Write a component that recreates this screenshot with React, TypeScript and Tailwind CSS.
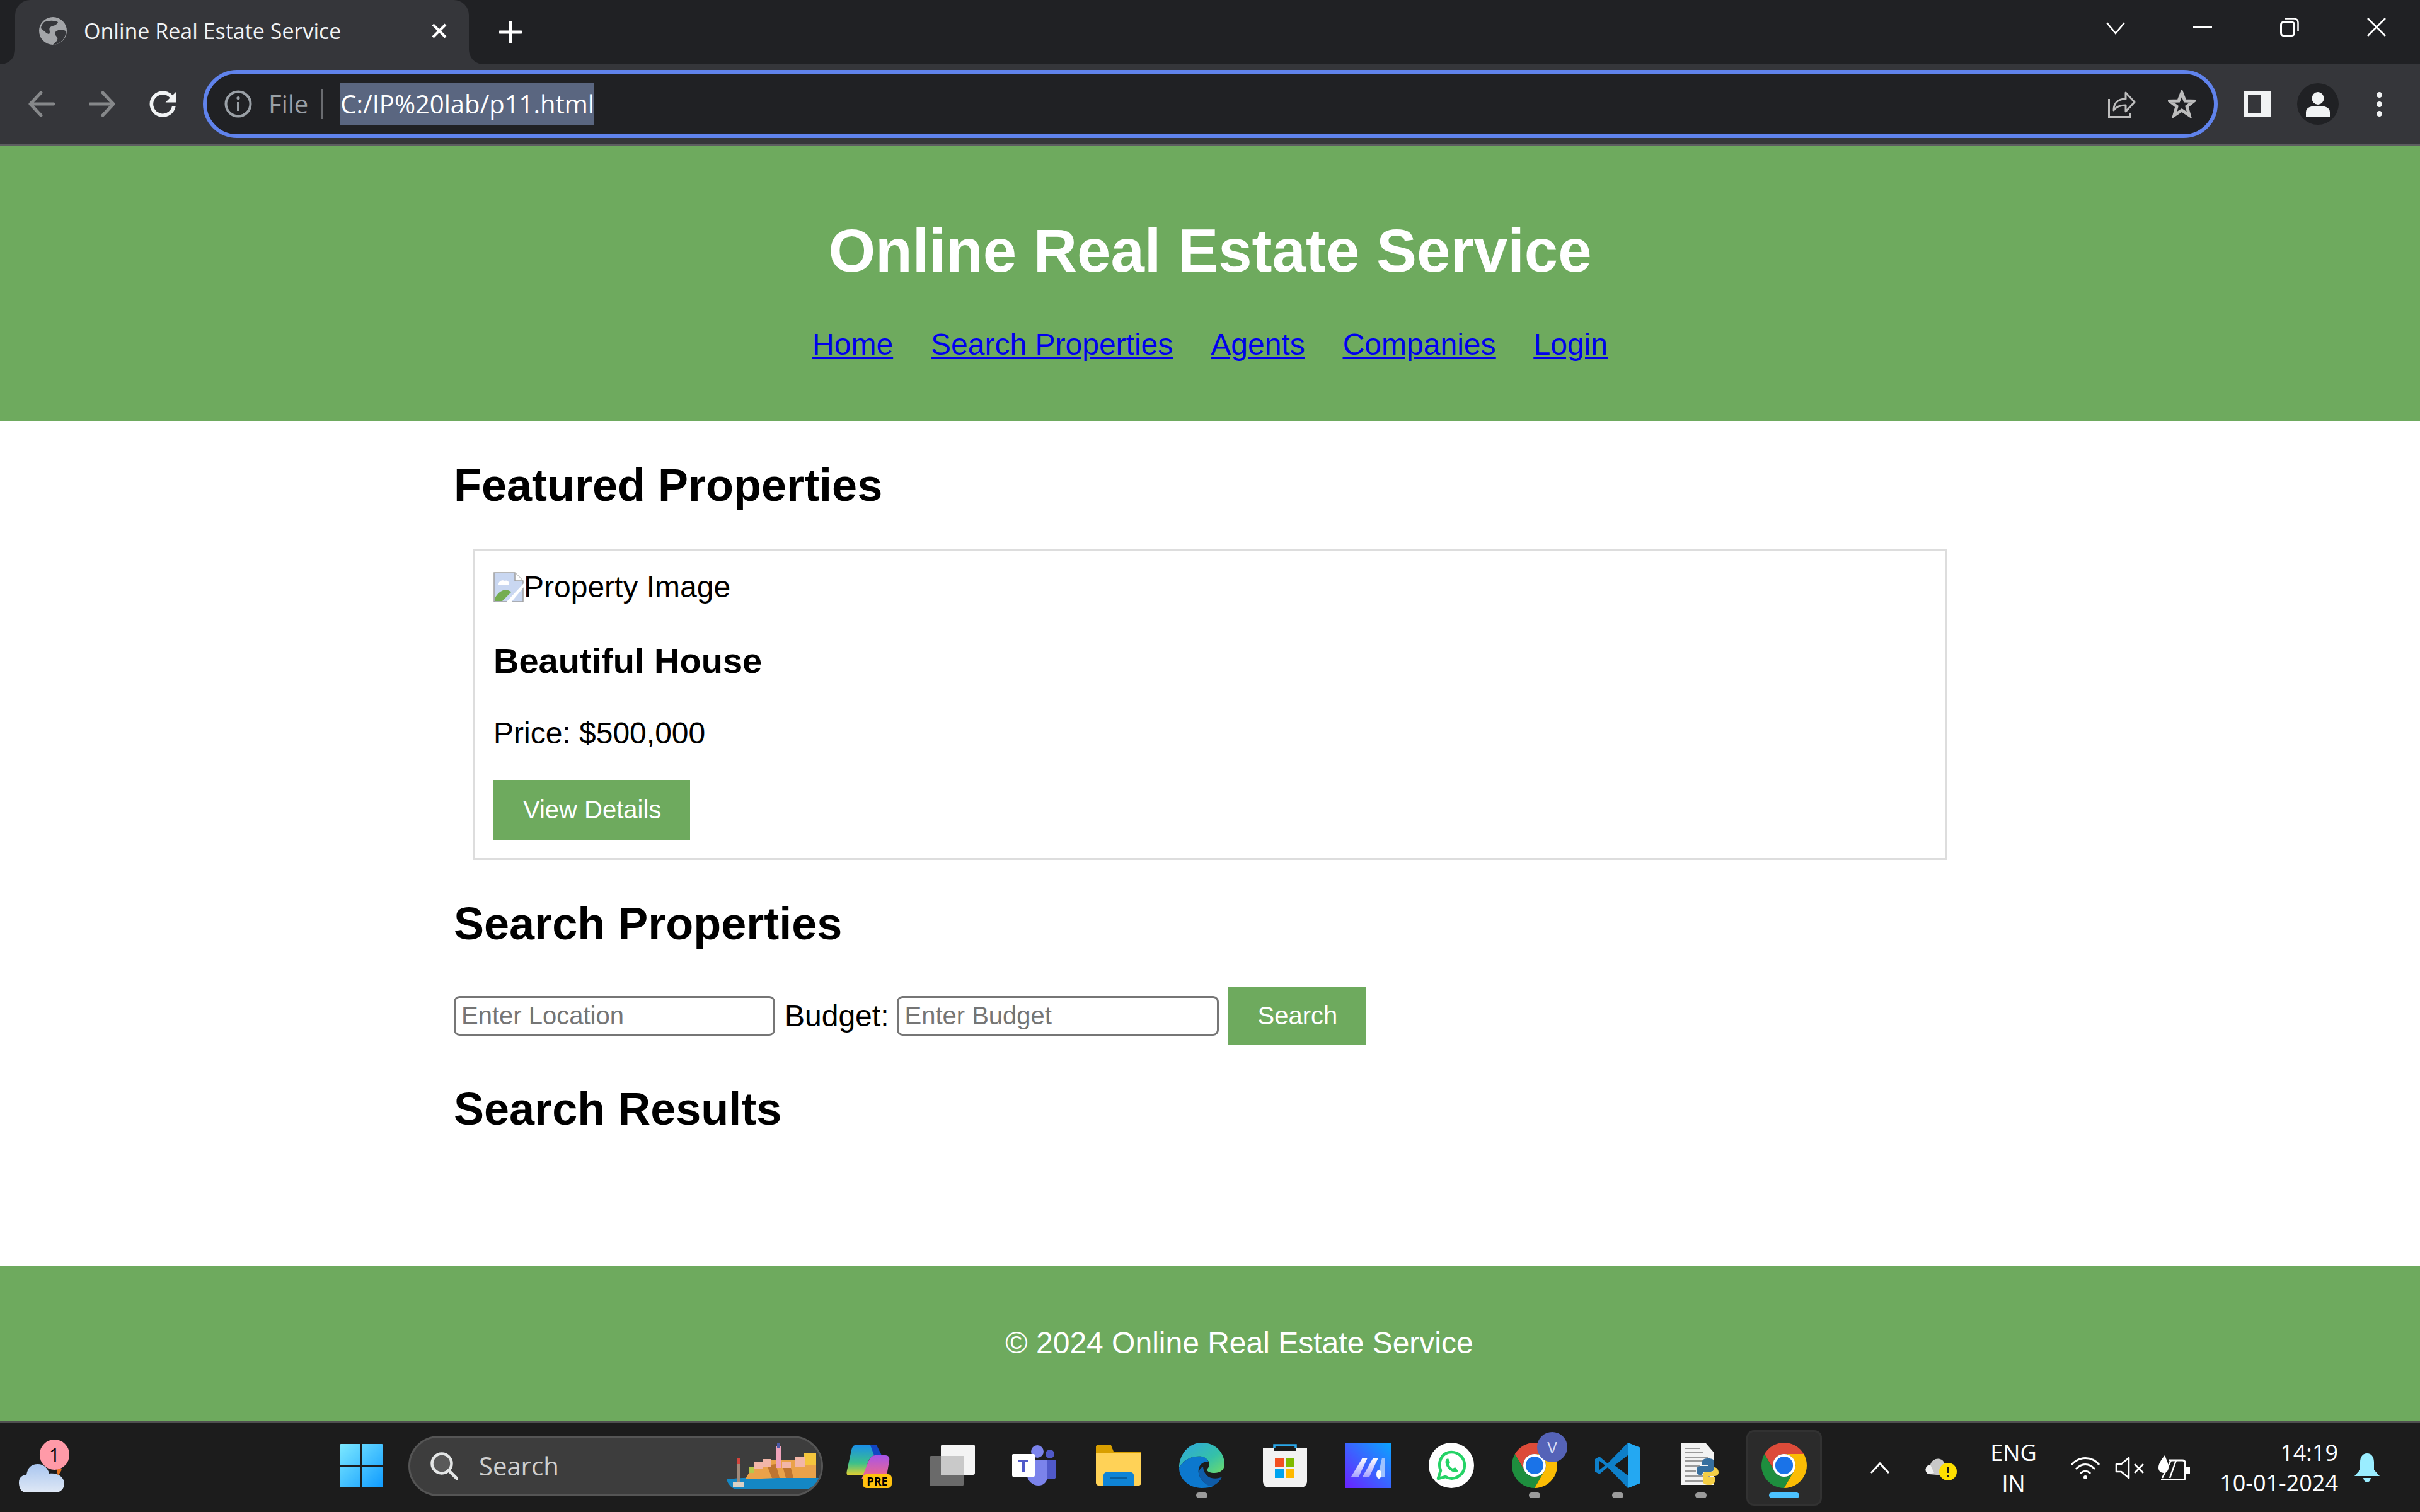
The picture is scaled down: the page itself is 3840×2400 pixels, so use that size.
import React from 'react';

const uiFont = "font-['Open_Sans','Noto_Sans',sans-serif]";

function ChromeLogo({ className }: { className: string }) {
    return (
        <svg viewBox="2 2 44 44" className={className}>
            <path d="M4.95 13A22 22 0 0 1 43.05 13H24A11 11 0 0 0 14.47 29.5Z" fill="#dd4b39" />
            <path d="M4.95 13A22 22 0 0 0 24 46L33.53 29.5A11 11 0 0 1 14.47 29.5Z" fill="#1e8e3e" />
            <path d="M24 46A22 22 0 0 0 43.05 13H24A11 11 0 0 1 33.53 29.5Z" fill="#fbbc04" />
            <circle cx="24" cy="24" r="11" fill="#fff" />
            <circle cx="24" cy="24" r="8.6" fill="#1a73e8" />
        </svg>
    );
}

function TabStrip() {
    return (
        <div className="flex h-[102px] shrink-0 items-start bg-[#202124]">
            <div className="relative ml-[24px] flex h-[102px] w-[720px] items-center rounded-t-[24px] bg-[#35363a] pb-[4px] pl-[38px]">
                <svg viewBox="0 0 24 24" className="absolute bottom-0 left-[-24px] h-[24px] w-[24px]">
                    <path d="M24 0V24H0C14 24 24 14 24 0Z" fill="#35363a" />
                </svg>
                <svg viewBox="0 0 24 24" className="absolute bottom-0 right-[-24px] h-[24px] w-[24px]">
                    <path d="M0 0V24H24C10 24 0 14 0 0Z" fill="#35363a" />
                </svg>
                <svg viewBox="0 0 44 44" className="h-[44px] w-[44px] shrink-0">
                    <circle cx="22" cy="22" r="22" fill="#a3a5a8" />
                    <path d="M8 8C16 5 24 5 30 8C28 14 22 13 18 16C14 19 19 23 16 27C12 27 6 20 3 18C3 14 5 11 8 8ZM42 22C36 19 28 20 25 25C24 30 31 31 29 36C27 40 24 42 22 44C32 44 44 34 42 22Z" fill="#35363a" />
                </svg>
                <span className={`ml-[27px] w-[405px] whitespace-nowrap text-[34px] leading-[48px] text-[#f1f3f4] ${uiFont}`}>Online Real Estate Service</span>
                <svg viewBox="0 0 24 24" className="ml-[147px] h-[24px] w-[24px]">
                    <path d="M2 2L22 22M22 2L2 22" stroke="#fff" strokeWidth="4" />
                </svg>
            </div>
            <svg viewBox="0 0 36 36" className="ml-[48px] mt-[33px] h-[36px] w-[36px]">
                <path d="M18 1V35M1 18H35" stroke="#fff" strokeWidth="5" strokeLinecap="round" />
            </svg>
            <div className="ml-auto mr-[54px] mt-[28px] flex items-start gap-[108px]">
                <svg viewBox="0 0 30 30" className="h-[30px] w-[30px]">
                    <path d="M1 8L15 25L29 8" stroke="#fff" strokeWidth="2.6" fill="none" />
                </svg>
                <svg viewBox="0 0 30 30" className="h-[30px] w-[30px]">
                    <path d="M0 15H30" stroke="#fff" strokeWidth="3" />
                </svg>
                <svg viewBox="0 0 30 30" className="h-[30px] w-[30px]">
                    <rect x="1.5" y="7" width="21" height="21.5" rx="4" stroke="#fff" strokeWidth="3" fill="none" />
                    <path d="M8 1.5H22C26 1.5 28.5 4 28.5 8V22" stroke="#fff" strokeWidth="2.5" fill="none" />
                </svg>
                <svg viewBox="0 0 30 30" className="h-[30px] w-[30px]">
                    <path d="M1 1L29 29M29 1L1 29" stroke="#fff" strokeWidth="2.6" />
                </svg>
            </div>
        </div>
    );
}

function Toolbar() {
    return (
        <div className="flex h-[129px] shrink-0 items-center border-b-[3px] border-[#5c5d60] bg-[#35363a]">
            <svg viewBox="0 0 42 42" className="ml-[45px] h-[42px] w-[42px]">
                <path d="M20 3L3 21L20 39M4 21H40" stroke="#86888a" strokeWidth="5" strokeLinecap="round" strokeLinejoin="round" fill="none" />
            </svg>
            <svg viewBox="0 0 42 42" className="ml-[54px] h-[42px] w-[42px]">
                <path d="M22 3L39 21L22 39M38 21H2" stroke="#86888a" strokeWidth="5" strokeLinecap="round" strokeLinejoin="round" fill="none" />
            </svg>
            <svg viewBox="0 0 42 42" className="ml-[54px] h-[43px] w-[43px]">
                <path d="M36 12A17.5 17.5 0 1 0 38 24" stroke="#f1f3f4" strokeWidth="5.5" fill="none" />
                <path d="M41 2V18H25Z" fill="#f1f3f4" />
            </svg>
            <div className="ml-[42px] flex h-[108px] w-[3197px] items-center rounded-full border-[6px] border-[#6083ec] bg-[#202124]">
                <svg viewBox="0 0 44 44" className="ml-[28px] h-[44px] w-[44px]">
                    <circle cx="22" cy="22" r="19.5" stroke="#9aa0a6" strokeWidth="4" fill="none" />
                    <path d="M22 19V33" stroke="#9aa0a6" strokeWidth="4" />
                    <circle cx="22" cy="12.5" r="2.6" fill="#9aa0a6" />
                </svg>
                <span className={`ml-[26px] text-[40px] leading-[48px] text-[#9aa0a6] ${uiFont}`}>File</span>
                <div className="ml-[21px] h-[47px] w-[2px] bg-[#6a6c70]" />
                <span className={`ml-[28px] flex h-[66px] w-[402px] items-center whitespace-nowrap bg-[#5a6680] text-[40px] text-white ${uiFont}`}>C:/IP%20lab/p11.html</span>
                <svg viewBox="0 0 44 44" className="ml-auto h-[44px] w-[44px]">
                    <path d="M1.5 14V42.5H35V36" stroke="#bdbdbd" strokeWidth="3" fill="none" />
                    <path d="M9 32C9 20 16 14 28 14V4L42 19L28 34V24C20 24 13 26 9 32Z" stroke="#bdbdbd" strokeWidth="3" strokeLinejoin="round" fill="none" />
                </svg>
                <svg viewBox="0 0 44 44" className="ml-[51px] mr-[29px] h-[44px] w-[44px]">
                    <path d="M22 4L27 17L41 17.5L30 26L34 40L22 32L10 40L14 26L3 17.5L17 17Z" stroke="#bdbdbd" strokeWidth="5" strokeLinejoin="miter" fill="none" />
                </svg>
            </div>
            <div className="ml-[42px] flex h-[42px] w-[42px] justify-start bg-[#f1f3f4] py-[6px] pl-[6px]">
                <div className="h-[30px] w-[21px] bg-[#35363a]" />
            </div>
            <div className="ml-[42px] flex h-[66px] w-[66px] items-center justify-center rounded-full bg-[#202124]">
                <svg viewBox="0 0 40 40" className="h-[40px] w-[40px]">
                    <ellipse cx="20" cy="11" rx="9.5" ry="10" fill="#f1f3f4" />
                    <path d="M1 40V33C1 25 10 23 20 23C30 23 39 25 39 33V40Z" fill="#f1f3f4" />
                </svg>
            </div>
            <div className="ml-[60px] flex flex-col gap-[6px]">
                <div className="h-[9px] w-[9px] rounded-full bg-[#f1f3f4]" />
                <div className="h-[9px] w-[9px] rounded-full bg-[#f1f3f4]" />
                <div className="h-[9px] w-[9px] rounded-full bg-[#f1f3f4]" />
            </div>
        </div>
    );
}

function BrokenImage() {
    return (
        <svg viewBox="0 0 48 48" className="h-[48px] w-[48px] shrink-0">
            <path d="M1 1H34L47 14V47H1Z" fill="#c9d7f1" stroke="#a0a0a0" strokeWidth="1.5" />
            <path d="M34 1V14H47" fill="#fff" stroke="#a0a0a0" strokeWidth="1.5" />
            <path d="M8 20C8 14 14 12 18 14C22 12 26 16 24 20Z" fill="#fff" />
            <path d="M2 46V42C8 30 20 24 28 32L14 46Z" fill="#74ad50" />
            <path d="M20 48L48 18V24L28 48Z" fill="#fff" />
        </svg>
    );
}

function Page() {
    return (
        <div className="flex min-h-0 flex-1 flex-col bg-white font-['Liberation_Sans',Arial,sans-serif] text-black">
            <header className="flex h-[438px] shrink-0 flex-col items-center bg-[#6eaa5e]">
                <h1 className="mt-[112px] text-[96px] font-bold leading-[110px] text-white">Online Real Estate Service</h1>
                <nav className="mt-[66px] flex gap-[60px] text-[48px] leading-[55px] text-[#0000ee] underline">
                    <a href="#">Home</a>
                    <a href="#">Search Properties</a>
                    <a href="#">Agents</a>
                    <a href="#">Companies</a>
                    <a href="#">Login</a>
                </nav>
            </header>
            <main className="mx-auto w-[2400px] flex-1">
                <h2 className="mt-[60px] text-[72px] font-bold leading-[83px]">Featured Properties</h2>
                <div className="mx-[30px] mt-[59px] h-[494px] border-[3px] border-[#dddddd] px-[30px] pt-[30px]">
                    <div className="flex h-[55px] items-center text-[48px] leading-[55px]">
                        <BrokenImage />
                        <span>Property Image</span>
                    </div>
                    <h3 className="mt-[58px] text-[56px] font-bold leading-[64px]">Beautiful House</h3>
                    <p className="mt-[55px] text-[48px] leading-[55px]">Price: $500,000</p>
                    <button className="mt-[47px] block bg-[#6eaa5e] py-[24px] pl-[47px] pr-[46px] text-[40px] leading-[47px] text-white">View Details</button>
                </div>
                <h2 className="mt-[60px] text-[72px] font-bold leading-[83px]">Search Properties</h2>
                <div className="mt-[58px] flex items-center text-[48px]">
                    <input placeholder="Enter Location" className="h-[63px] w-[510px] rounded-[9px] border-[3px] border-[#767676] px-[9px] text-[40px] placeholder:text-[#757575]" />
                    <span className="ml-[15px] leading-[55px]">Budget:</span>
                    <input placeholder="Enter Budget" className="ml-[13px] h-[63px] w-[511px] rounded-[9px] border-[3px] border-[#767676] px-[9px] text-[40px] placeholder:text-[#757575]" />
                    <button className="ml-[14px] bg-[#6eaa5e] py-[23px] pl-[47px] pr-[46px] text-[40px] leading-[47px] text-white">Search</button>
                </div>
                <h2 className="mt-[60px] text-[72px] font-bold leading-[83px]">Search Results</h2>
            </main>
            <footer className="flex h-[246px] shrink-0 items-center justify-center bg-[#6eaa5e] pb-[4px] pl-[93px] text-[48px] leading-[55px] text-white">
                © 2024 Online Real Estate Service
            </footer>
        </div>
    );
}

function WeatherIcon() {
    return (
        <div className="relative ml-[30px] h-[84px] w-[80px]">
            <svg viewBox="0 0 72 60" className="absolute bottom-[0px] left-0 h-[60px] w-[72px]">
                <defs>
                    <linearGradient id="cloud" x1="0" y1="0" x2="0" y2="1">
                        <stop offset="0" stopColor="#a9c6f0" />
                        <stop offset="1" stopColor="#dfe8f5" />
                    </linearGradient>
                </defs>
                <path d="M58 12L68 24L62 34Z" fill="#e5711c" />
                <path d="M12 60C2 60 0 50 0 44C0 36 6 32 12 32C14 20 20 15 30 15C40 15 46 22 48 30C62 28 72 36 72 46C72 54 66 60 58 60Z" fill="url(#cloud)" />
            </svg>
            <div className="absolute left-[33px] top-0 flex h-[48px] w-[47px] items-center justify-center rounded-full bg-[#ff9aa8] font-['Open_Sans',sans-serif] text-[30px] leading-none text-black">1</div>
        </div>
    );
}

function SearchBox() {
    return (
        <div className={`ml-[40px] flex h-[96px] w-[658px] items-center rounded-full border-[3px] border-[#555555] bg-[#3d3d3d] pl-[32px] ${uiFont}`}>
            <svg viewBox="0 0 44 44" className="h-[44px] w-[44px] shrink-0">
                <circle cx="18" cy="18" r="15.5" stroke="#e4e6e6" strokeWidth="4.5" fill="#5a5a5a" />
                <path d="M29 29L42 42" stroke="#e4e6e6" strokeWidth="5" strokeLinecap="round" />
            </svg>
            <span className="ml-[33px] text-[40px] leading-[48px] text-[#cfcfcf]">Search</span>
            <svg viewBox="0 0 146 74" className="ml-[266px] h-[74px] w-[146px] shrink-0">
                <path d="M0 58C30 54 110 54 146 56C142 66 134 74 124 74H18C8 74 2 66 0 58Z" fill="#1487c4" />
                <path d="M30 58C36 44 44 38 52 34L62 28H120L142 34V56H80Z" fill="#eaa24a" />
                <path d="M64 36L72 56H84L78 34ZM88 34L94 56H106L100 32Z" fill="#bf7530" />
                <rect x="78" y="6" width="8" height="34" fill="#f0a3bb" />
                <rect x="80" y="0" width="4" height="8" fill="#4b5aa8" />
                <path d="M122 16H142V36H122Z" fill="#f5c53d" />
                <path d="M108 22H124V38H108ZM88 30H102V40H88ZM44 30H58V42H44ZM58 26H70V38H58Z" fill="#f2b6a8" />
                <path d="M36 38H44V48H36Z" fill="#b7c84a" />
                <rect x="16" y="28" width="6" height="36" fill="#a08a7a" />
                <rect x="16" y="24" width="6" height="10" fill="#d4443c" />
                <path d="M10 62H28V70H10Z" fill="#d9d2c6" />
            </svg>
        </div>
    );
}

function CopilotIcon() {
    return (
        <div className="relative h-[68px] w-[72px]">
            <svg viewBox="0 0 72 68" className="h-[68px] w-[72px]">
                <defs>
                    <linearGradient id="cop1" x1="0" y1="0" x2="0" y2="1">
                        <stop offset="0" stopColor="#1a8fe8" />
                        <stop offset=".6" stopColor="#3cc08a" />
                        <stop offset="1" stopColor="#e8d02c" />
                    </linearGradient>
                    <linearGradient id="cop2" x1="0" y1="0" x2="0" y2="1">
                        <stop offset="0" stopColor="#a855e8" />
                        <stop offset="1" stopColor="#f76a80" />
                    </linearGradient>
                </defs>
                <path d="M14 2H46L50 16C42 18 36 22 34 30L28 50H4C0 50 0 46 1 42L8 10C9 5 11 2 14 2Z" fill="url(#cop1)" />
                <path d="M38 2H48L56 18H44Z" fill="#1247c4" />
                <path d="M46 18H62C67 18 69 22 68 27L64 50C63 54 60 56 56 56H24L34 30C36 24 40 18 46 18Z" fill="url(#cop2)" />
            </svg>
            <div className="absolute bottom-[-2px] right-0 flex h-[22px] w-[46px] items-center justify-center rounded-[6px] bg-[#ffc20e] font-['Open_Sans',sans-serif] text-[18px] font-bold leading-none text-black">PRE</div>
        </div>
    );
}

function TaskViewIcon() {
    return (
        <svg viewBox="0 0 72 66" className="h-[66px] w-[72px]">
            <rect x="0" y="18" width="54" height="48" rx="3" fill="#6a6a6a" />
            <rect x="18" y="0" width="54" height="48" rx="3" fill="#f4f4f4" />
            <rect x="18" y="18" width="36" height="30" fill="#c9c9c9" />
        </svg>
    );
}

function TeamsIcon() {
    return (
        <svg viewBox="0 0 74 64" className="h-[64px] w-[74px]">
            <circle cx="40" cy="10" r="10" fill="#7b83eb" />
            <circle cx="60" cy="14" r="7" fill="#5059c9" />
            <path d="M50 24H70V48C70 54 66 54 62 54H50Z" fill="#5059c9" />
            <path d="M24 24H56V50C56 58 50 64 42 64C32 64 24 56 24 48Z" fill="#7b83eb" />
            <rect x="0" y="14" width="36" height="36" rx="2" fill="#fff" />
            <path d="M10 23H26V27H20V42H16V27H10Z" fill="#5059c9" />
        </svg>
    );
}

function FolderIcon() {
    return (
        <svg viewBox="0 0 72 64" className="h-[64px] w-[72px]">
            <path d="M0 2C0 1 1 0 2 0H24L28 10H72V20H0Z" fill="#d99f00" />
            <path d="M0 12H72V60C72 62 70 64 68 64H4C2 64 0 62 0 60Z" fill="#ffd257" />
            <path d="M12 60V48C12 45 14 43 17 43H55C58 43 60 45 60 48V64H12Z" fill="#0f84d6" />
            <rect x="22" y="50" width="28" height="3" fill="#0a5f9e" />
        </svg>
    );
}

function EdgeIcon() {
    return (
        <svg viewBox="0 0 72 72" className="h-[72px] w-[72px]">
            <defs>
                <linearGradient id="edge1" x1="0" y1="0" x2="1" y2="1">
                    <stop offset="0" stopColor="#2ea6e0" />
                    <stop offset=".6" stopColor="#35c1a8" />
                    <stop offset="1" stopColor="#6fdc6a" />
                </linearGradient>
            </defs>
            <path d="M36 0C58 0 72 16 72 34C72 44 64 48 56 48C50 48 44 46 44 42C50 38 50 26 36 22C20 20 6 28 0 40C0 18 16 0 36 0Z" fill="url(#edge1)" />
            <path d="M0 40C6 28 20 20 36 22C44 24 46 28 46 30C34 30 28 40 32 52C36 62 46 70 56 68C50 71 42 72 36 72C16 72 0 58 0 40Z" fill="#0c78ce" />
            <path d="M32 52C36 62 46 70 52 69C60 66 66 60 68 54C62 58 50 58 44 52C40 48 38 42 38 38C33 40 30 46 32 52Z" fill="#0f5ca8" />
        </svg>
    );
}

function StoreIcon() {
    return (
        <svg viewBox="0 0 70 70" className="h-[70px] w-[70px]">
            <path d="M18 14V3H52V14" stroke="#2aa8ea" strokeWidth="3.5" fill="none" />
            <path d="M0 8H70V60C70 66 66 70 60 70H10C4 70 0 66 0 60Z" fill="#f2f2f2" />
            <rect x="18" y="8" width="34" height="4" fill="#1a1a1a" />
            <rect x="19" y="24" width="14" height="14" fill="#f25022" />
            <rect x="36" y="24" width="14" height="14" fill="#7fba00" />
            <rect x="19" y="41" width="14" height="14" fill="#00a4ef" />
            <rect x="36" y="41" width="14" height="14" fill="#ffb900" />
        </svg>
    );
}

function LetterTileIcon() {
    return (
        <svg viewBox="0 0 72 72" className="h-[72px] w-[72px]">
            <defs>
                <linearGradient id="tile" x1="1" y1="0" x2="0" y2="1">
                    <stop offset="0" stopColor="#0aa5ff" />
                    <stop offset="1" stopColor="#6a22ff" />
                </linearGradient>
                <linearGradient id="tileBar" x1="0" y1="0" x2="0" y2="1">
                    <stop offset="0" stopColor="#ffffff" />
                    <stop offset="1" stopColor="#a9a4ff" />
                </linearGradient>
            </defs>
            <rect width="72" height="72" fill="url(#tile)" />
            <path d="M27 24H35L21 54H9ZM44 24H52L38 54H27Z" fill="url(#tileBar)" />
            <path d="M58 24H62V54H52V50Z" fill="#9ec2ff" />
            <ellipse cx="53" cy="50" rx="4" ry="7" fill="#fff" />
        </svg>
    );
}

function WhatsappIcon() {
    return (
        <svg viewBox="0 0 72 72" className="h-[72px] w-[72px]">
            <circle cx="36" cy="36" r="36" fill="#fff" />
            <path d="M15 57L19 44C14 32 20 15 36 15C48 15 57 24 57 36C57 52 39 62 27 54Z" fill="none" stroke="#25d366" strokeWidth="4.5" strokeLinejoin="round" />
            <path d="M28 26C25 30 27 37 32 42C37 47 43 48 47 45L42 39L38 41C35 39 33 37 32 34L34 31L31 25Z" fill="#25d366" />
        </svg>
    );
}

function VsCodeIcon() {
    return (
        <svg viewBox="0 0 72 72" className="h-[72px] w-[72px]">
            <path d="M52 0L20 33L7 22L0 26V46L7 50L20 39L52 72L72 64V8Z" fill="#0e7fc9" />
            <path d="M52 0L72 8V64L52 72Z" fill="#24a8f2" />
            <path d="M7 29L16 36L7 43Z M52 20V52L31 36Z" fill="#1a1a1a" />
        </svg>
    );
}

function PythonFileIcon() {
    return (
        <svg viewBox="0 0 68 70" className="ml-[4px] h-[70px] w-[68px]">
            <path d="M1 0H40L52 14V66H1Z" fill="#f3f3f3" />
            <path d="M6 8H30M6 14H36M6 22H44M6 28H40M6 36H30M6 44H24M6 52H46M6 60H40" stroke="#9a9a9a" strokeWidth="2" />
            <path d="M34 30C34 25 38 24 44 24C50 24 53 26 53 30V40C53 44 50 45 46 45H40C36 45 34 48 34 50H30C26 50 25 46 25 42C25 38 28 36 32 36H44V34H34Z" fill="#366f9f" />
            <path d="M53 38C57 38 60 42 60 46C60 50 57 52 53 52H44V54H54V60C54 64 50 66 45 66C39 66 35 64 35 60V50C35 47 38 45 42 45H48C52 45 53 42 53 38Z" fill="#f5cf46" />
        </svg>
    );
}

function TaskButton({ children, dot, active }: { children: React.ReactNode; dot?: boolean; active?: boolean }) {
    return (
        <div className={`relative flex h-[120px] w-[120px] shrink-0 items-center justify-center rounded-[12px] pb-[8px] ${active ? 'border-[3px] border-[#323232] bg-[#2b2b2b]' : ''}`}>
            {children}
            {dot && <div className="absolute bottom-[12px] h-[9px] w-[18px] rounded-full bg-[#9b9b9b]" />}
            {active && <div className="absolute bottom-[9px] h-[9px] w-[48px] rounded-full bg-[#4cc2ff]" />}
        </div>
    );
}

function Taskbar() {
    return (
        <div className={`flex h-[144px] shrink-0 items-center border-t-[3px] border-[#4f4f4f] bg-[#1c1c1c] text-white ${uiFont}`}>
            <div className="mb-[6px] flex items-center">
                <WeatherIcon />
                <svg viewBox="0 0 69 69" className="ml-[429px] h-[69px] w-[69px]">
                    <defs>
                        <linearGradient id="win" x1="0" y1="0" x2="1" y2="1">
                            <stop offset="0" stopColor="#7de9ff" />
                            <stop offset="1" stopColor="#0f9bff" />
                        </linearGradient>
                    </defs>
                    <path d="M2 0H33V33H0V2C0 1 1 0 2 0ZM36 0H67C68 0 69 1 69 2V33H36ZM0 36H33V69H2C1 69 0 68 0 67ZM36 36H69V67C69 68 68 69 67 69H36Z" fill="url(#win)" />
                </svg>
                <SearchBox />
            </div>
            <div className="ml-[13px] flex gap-[12px]">
                <TaskButton><CopilotIcon /></TaskButton>
                <TaskButton><TaskViewIcon /></TaskButton>
                <TaskButton><TeamsIcon /></TaskButton>
                <TaskButton><FolderIcon /></TaskButton>
                <TaskButton dot><EdgeIcon /></TaskButton>
                <TaskButton><StoreIcon /></TaskButton>
                <TaskButton><LetterTileIcon /></TaskButton>
                <TaskButton><WhatsappIcon /></TaskButton>
                <TaskButton dot>
                    <ChromeLogo className="h-[72px] w-[72px]" />
                    <div className="absolute right-[8px] top-[3px] flex h-[48px] w-[48px] items-center justify-center rounded-full bg-[#5563b8] text-[26px] leading-none text-[#d8dcf5]">V</div>
                </TaskButton>
                <TaskButton dot><VsCodeIcon /></TaskButton>
                <TaskButton dot><PythonFileIcon /></TaskButton>
                <TaskButton active><ChromeLogo className="h-[72px] w-[72px]" /></TaskButton>
            </div>
            <svg viewBox="0 0 32 20" className="ml-[76px] h-[20px] w-[32px]">
                <path d="M2 18L16 3L30 18" stroke="#fff" strokeWidth="3" fill="none" />
            </svg>
            <svg viewBox="0 0 50 40" className="ml-[56px] h-[40px] w-[50px]">
                <path d="M6 30C-2 28 -1 16 8 15C11 4 26 2 30 12C38 12 42 18 42 24L30 32Z" fill="#c8c8c8" />
                <path d="M6 30C-2 28 -1 16 8 15L14 28Z" fill="#f0f0f0" />
                <circle cx="36" cy="26" r="14" fill="#ffe000" />
                <path d="M36 18V28M36 31V34" stroke="#1c1c1c" strokeWidth="3.5" />
            </svg>
            <div className="ml-[55px] flex w-[70px] flex-col items-center text-[36px] leading-[49px]">
                <span>ENG</span>
                <span>IN</span>
            </div>
            <svg viewBox="0 0 48 36" className="ml-[55px] h-[36px] w-[48px]">
                <path d="M2 13C14 -1 34 -1 46 13M9 20C18 10 30 10 39 20M16 27C21 22 27 22 32 27" stroke="#fff" strokeWidth="3" fill="none" />
                <circle cx="24" cy="33" r="3" fill="#fff" />
            </svg>
            <svg viewBox="0 0 48 34" className="ml-[23px] h-[34px] w-[48px]">
                <path d="M2 11H10L22 1V33L10 23H2Z" stroke="#fff" strokeWidth="2.6" strokeLinejoin="round" fill="none" />
                <path d="M31 11L45 25M45 11L31 25" stroke="#fff" strokeWidth="2.6" />
            </svg>
            <svg viewBox="0 0 50 40" className="ml-[21px] h-[40px] w-[50px]">
                <path d="M10 0C3 9 0 14 0 20C0 25 4 28 8 28C13 28 16 24 16 19C16 13 13 8 10 0Z" fill="#fff" />
                <path d="M16 8H38C41 8 42 10 42 12V36C42 38 41 39 38 39H4" stroke="#fff" strokeWidth="3" fill="none" />
                <path d="M20 8L6 36M28 8L18 36" stroke="#fff" strokeWidth="2.4" />
                <rect x="44" y="18" width="6" height="12" fill="#fff" />
            </svg>
            <div className="ml-[47px] flex w-[188px] flex-col items-end whitespace-nowrap text-[36px] leading-[48px]">
                <span>14:19</span>
                <span>10-01-2024</span>
            </div>
            <svg viewBox="0 0 40 46" className="ml-[26px] h-[46px] w-[40px]">
                <path d="M20 0C28 0 31 7 31 14V26L40 36H0L9 26V14C9 7 12 0 20 0Z" fill="#9aedff" />
                <path d="M14 39H26C25 44 22 46 20 46C18 46 15 44 14 39Z" fill="#9aedff" />
            </svg>
        </div>
    );
}

export default function App() {
    return (
        <div className="flex h-[2400px] w-[3840px] flex-col overflow-hidden">
            <TabStrip />
            <Toolbar />
            <Page />
            <Taskbar />
        </div>
    );
}
